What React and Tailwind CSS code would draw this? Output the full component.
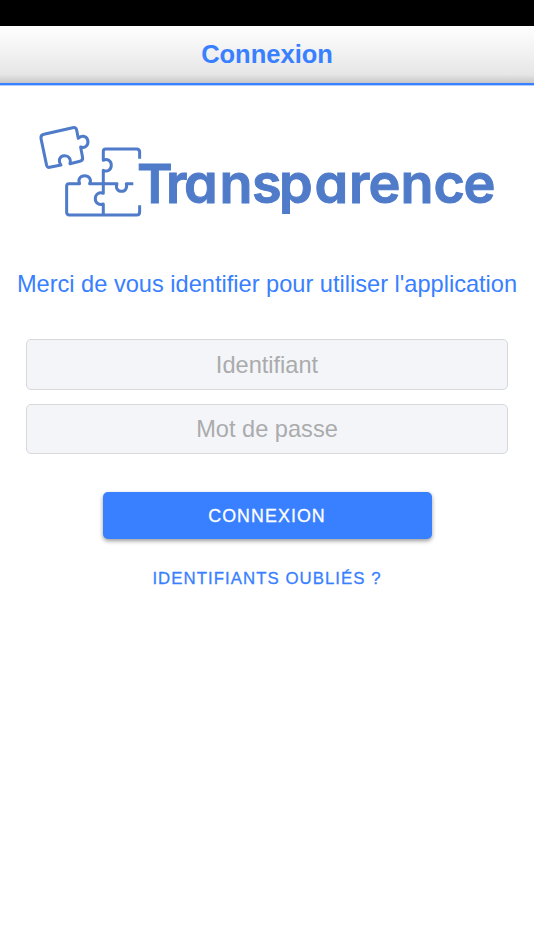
const Logo = () => {
    return (
        <svg width="474" height="110" viewBox="0 0 474 110" className="mx-auto block overflow-visible" role="img" aria-label="Transparence">
            <g transform="translate(-0.7 0) scale(0.33333)" fill="none" stroke="#4f7bc9" strokeWidth="9" strokeLinecap="round" strokeLinejoin="round">
                {/* Loose piece */}
                <path d="M95 150 L61 157 Q54 158 52 151 L35 70 Q34 60 44 58 L130 38 Q140 36 142 45 L147 70 C154 61 170 61 175 74 C179 90 168 101 154 96 L160 128 Q161 137 152 139 L122 146 C126 131 117 121 105 122 C92 123 85 135 95 150" />
                {/* Assembled pieces */}
                <path strokeLinecap="butt" d="M331 131 V111 Q331 102 322 102 H229 Q222 102 222 109 V136 C234 129 246 138 246 151 C246 165 234 172 222 166 V235 C210 229 198 238 198 251 C198 264 210 272 222 267 V300" />
                <path strokeLinecap="butt" d="M312 206 H291 C295 219 288 229 277 229 C265 229 258 219 263 206 H181 C188 193 179 182 166 182 C153 182 145 193 151 206 H119 Q112 206 112 213 V292 Q112 300 120 300 H322 Q331 300 331 291 V271" />
            </g>
            <text
                x="107 136 154 189.5 222 249 284.5 319 338.5 370.5 403.5 433.5"
                y="87.7"
                fill="#4f7bc9"
                stroke="#4f7bc9"
                strokeWidth="1"
                className="font-['Inter',sans-serif] text-[54px] font-semibold [font-feature-settings:'cv11']"
            >
                Transparence
            </text>
        </svg>
    );
};

const Field = ({ type, placeholder }) => {
    return (
        <input
            type={type}
            placeholder={placeholder}
            className="block h-[50.5px] w-full rounded-[5px] border-[1.5px] border-[#d7d8da] bg-[#f4f5f9] pt-[2px] text-center text-[23.6px] text-[#333] outline-none placeholder:text-[#aaabad]"
        />
    );
};

const App = () => {
    return (
        <div className="min-h-[950px] bg-white font-['Liberation_Sans',sans-serif] text-[#3880ff]">
            {/* Status bar */}
            <div className="h-[26px] bg-black"></div>

            {/* Header */}
            <header className="flex h-[59px] items-center justify-center border-b-2 border-[#3880ff] bg-linear-to-b from-white via-[#e6e6e6] via-85% to-[#c8c8c8] shadow-[0_1px_0_rgba(56,128,255,0.4)]">
                <h1 className="text-[25.5px] font-bold">Connexion</h1>
            </header>

            <main className="flex flex-col pt-[30px]">
                <Logo />

                <p className="mt-[43px] text-center text-[23.6px] leading-8 whitespace-nowrap">
                    Merci de vous identifier pour utiliser l'application
                </p>

                <form className="mt-[39px] flex flex-col px-[26px]">
                    <div className="flex flex-col gap-[14px]">
                        <Field type="text" placeholder="Identifiant" />
                        <Field type="password" placeholder="Mot de passe" />
                    </div>

                    <button
                        type="button"
                        className="mx-auto mt-[38px] h-[47px] w-[329px] rounded-[5px] bg-[#3880ff] pt-px text-[17.8px] tracking-[1.1px] text-white shadow-[0_2px_4px_rgba(0,0,0,0.4)] [-webkit-text-stroke:0.3px]"
                    >
                        CONNEXION
                    </button>
                    <button
                        type="button"
                        className="mx-auto mt-[25.5px] h-7 text-[16.8px] tracking-[1.05px] whitespace-nowrap [-webkit-text-stroke:0.3px]"
                    >
                        IDENTIFIANTS OUBLIÉS ?
                    </button>
                </form>
            </main>
        </div>
    );
};

export default App;
